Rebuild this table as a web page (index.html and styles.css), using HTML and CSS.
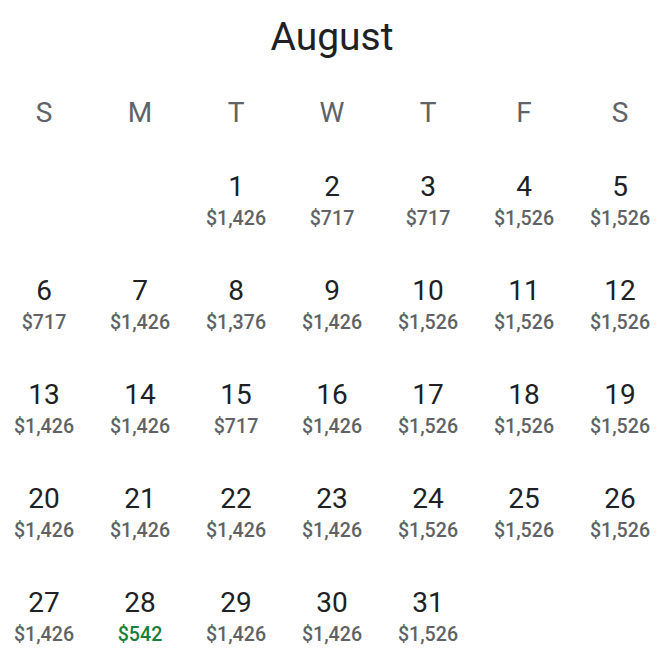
FILE: index.html
```html
<!DOCTYPE html>
<html lang="en">
<head>
<meta charset="utf-8">
<title>August</title>
<link rel="stylesheet" href="styles.css">
</head>
<body>
<div class="cal">
  <h1 class="title">August</h1>
  <div class="weekdays">
    <div>S</div><div>M</div><div>T</div><div>W</div><div>T</div><div>F</div><div>S</div>
  </div>
  <div class="days">
    <div class="day empty"></div>
    <div class="day empty"></div>
    <div class="day"><div class="num">1</div><div class="price">$1,426</div></div>
    <div class="day"><div class="num">2</div><div class="price">$717</div></div>
    <div class="day"><div class="num">3</div><div class="price">$717</div></div>
    <div class="day"><div class="num">4</div><div class="price">$1,526</div></div>
    <div class="day"><div class="num">5</div><div class="price">$1,526</div></div>

    <div class="day"><div class="num">6</div><div class="price">$717</div></div>
    <div class="day"><div class="num">7</div><div class="price">$1,426</div></div>
    <div class="day"><div class="num">8</div><div class="price">$1,376</div></div>
    <div class="day"><div class="num">9</div><div class="price">$1,426</div></div>
    <div class="day"><div class="num">10</div><div class="price">$1,526</div></div>
    <div class="day"><div class="num">11</div><div class="price">$1,526</div></div>
    <div class="day"><div class="num">12</div><div class="price">$1,526</div></div>

    <div class="day"><div class="num">13</div><div class="price">$1,426</div></div>
    <div class="day"><div class="num">14</div><div class="price">$1,426</div></div>
    <div class="day"><div class="num">15</div><div class="price">$717</div></div>
    <div class="day"><div class="num">16</div><div class="price">$1,426</div></div>
    <div class="day"><div class="num">17</div><div class="price">$1,526</div></div>
    <div class="day"><div class="num">18</div><div class="price">$1,526</div></div>
    <div class="day"><div class="num">19</div><div class="price">$1,526</div></div>

    <div class="day"><div class="num">20</div><div class="price">$1,426</div></div>
    <div class="day"><div class="num">21</div><div class="price">$1,426</div></div>
    <div class="day"><div class="num">22</div><div class="price">$1,426</div></div>
    <div class="day"><div class="num">23</div><div class="price">$1,426</div></div>
    <div class="day"><div class="num">24</div><div class="price">$1,526</div></div>
    <div class="day"><div class="num">25</div><div class="price">$1,526</div></div>
    <div class="day"><div class="num">26</div><div class="price">$1,526</div></div>

    <div class="day"><div class="num">27</div><div class="price">$1,426</div></div>
    <div class="day"><div class="num">28</div><div class="price low">$542</div></div>
    <div class="day"><div class="num">29</div><div class="price">$1,426</div></div>
    <div class="day"><div class="num">30</div><div class="price">$1,426</div></div>
    <div class="day"><div class="num">31</div><div class="price">$1,526</div></div>
  </div>
</div>
</body>
</html>
```
FILE: styles.css
```css
html, body {
  margin: 0;
  padding: 0;
  background: #ffffff;
}

body {
  font-family: Roboto, "Noto Sans", "Liberation Sans", sans-serif;
  color: #202124;
}

.cal {
  width: 664px;
  padding-top: 13px;
}

.title {
  margin: 0;
  font-size: 39px;
  line-height: 48px;
  font-weight: 400;
  text-align: center;
  color: #202124;
}

.weekdays,
.days {
  display: grid;
  grid-template-columns: repeat(7, 88px);
  column-gap: 8px;
}

.weekdays {
  margin-top: 36px;
  font-size: 28px;
  line-height: 32px;
  color: #5f6368;
  text-align: center;
}

.days {
  margin-top: 42px;
  row-gap: 44px;
}

.day {
  display: flex;
  flex-direction: column;
  align-items: center;
  height: 60px;
}

.num {
  font-size: 28px;
  line-height: 32px;
  color: #202124;
}

.price {
  margin-top: 4px;
  font-size: 19.6px;
  line-height: 24px;
  font-weight: 500;
  color: #5f6368;
}

.price.low {
  color: #188038;
}
```
